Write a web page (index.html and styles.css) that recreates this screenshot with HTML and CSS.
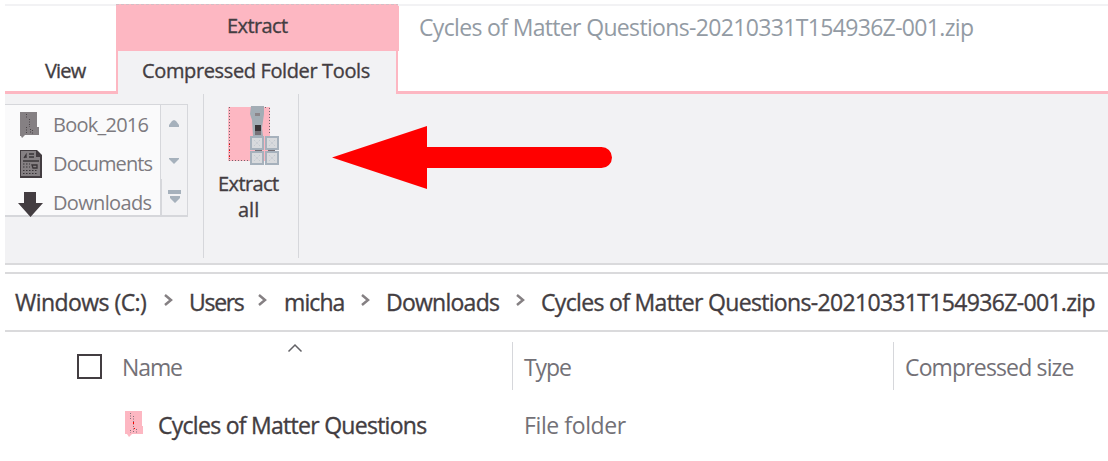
FILE: index.html
```html
<!DOCTYPE html>
<html lang="en">
<head>
<meta charset="utf-8">
<title>Compressed Folder Tools</title>
<link rel="stylesheet" href="styles.css">
</head>
<body>
<main class="window">
  <header class="titlebar">
    <div class="tab-view"><span class="t-view">View</span></div>
    <div class="tab-tools">
      <div class="tab-context"><span class="t-extract">Extract</span></div>
      <div class="tab-name"><span class="t-tools">Compressed Folder Tools</span></div>
    </div>
    <div class="caption"><span class="t-title">Cycles of Matter Questions-20210331T154936Z-001.zip</span></div>
  </header>

  <section class="ribbon">
    <div class="group group-places">
      <div class="gallery">
        <ul class="places">
          <li>
            <svg class="place-icon" width="26" height="28" viewBox="0 0 26 28"><path d="M5 1h17v15h2v8H10l-3 3-1-2H5z" fill="#858083"/><path d="M11.500 3v5m3 0v8m-3 0v7m4-5v5m2-4v4" stroke="#494346" stroke-dasharray="1 1.5"/></svg>
            <span class="t-book">Book_2016</span>
          </li>
          <li>
            <svg class="place-icon" width="26" height="28" viewBox="0 0 26 28"><path d="M5 0h17l5 5v23H5z" fill="#433d41"/><path d="M6 1h15v6h4v19H6z" fill="#858083"/><path d="M9 8l2-3v3M14 4h5M14 7h5M8 11h16M17 15h5v3h-4z" fill="none" stroke="#393438" stroke-width="1.3"/><path d="M8 14h7M8 17h7M8 20.500h15M8 23.500h15" stroke="#393438" stroke-width="1.2" stroke-dasharray="1.500 1.500"/></svg>
            <span class="t-docs">Documents</span>
          </li>
          <li>
            <svg class="place-icon" width="26" height="28" viewBox="0 0 26 28"><path d="M9 2h12v11h7L15.500 27 3 13h6z" fill="#433d41"/></svg>
            <span class="t-down">Downloads</span>
          </li>
        </ul>
        <div class="scroller">
          <div class="scroll-btn"><svg width="12" height="8"><path d="M6 0l2 1 3 4v2H1V5l3-4z" fill="#a6b1bc"/></svg></div>
          <div class="scroll-btn"><svg width="12" height="8"><path d="M1 1h10v1L6 7 1 2z" fill="#a6b1bc"/></svg></div>
          <div class="scroll-btn scroll-more"><svg width="14" height="14"><path d="M0 0h13v4H0zM2 6h10v2l-5 5-5-5z" fill="#a6b1bc"/></svg></div>
        </div>
      </div>
    </div>
    <div class="group group-extract">
      <svg class="extract-icon" width="56" height="62" viewBox="0 0 56 62">
        <path d="M4 3h42v54H4z" fill="#fdb7c2"/>
        <path d="M5.500 3v54M5 56.500h22M29 3.500h15M45.500 4v27" fill="none" stroke="#71666d" stroke-dasharray="1 2"/>
        <path d="M5.500 40v13" stroke="#f00" stroke-dasharray="1 5"/>
        <path d="M27 2h13v8l-2 14 1 8H29l-1-16-2-6z" fill="#a3adb5"/>
        <path d="M31 23h6v8h-6z" fill="#777278"/>
        <path d="M31 9h5v3h-5z" fill="#8c8589"/>
        <path d="M31 21h6v6h-6z" fill="#393438"/>
        <path d="M31 44h7v4h-7m13-4h7v4h-7" fill="#756f75"/>
        <g fill="#d8dadd" stroke="#a6b1bc" stroke-width="2"><path d="M27 33h12v12H27zM42 33h12v12H42zM27 48h12v12H27zM42 48h12v12H42z"/></g>
        <path d="M30 36l6 6m0-6l-6 6m15-6l6 6m0-6l-6 6M30 51l6 6m0-6l-6 6m15-6l6 6m0-6l-6 6" stroke="#bac2ca" stroke-dasharray="1 1.500"/>
      </svg>
      <span class="t-cmd">Extract</span>
      <span class="t-all">all</span>
    </div>
    <svg class="pointer" width="282" height="66" viewBox="0 0 282 66"><path d="M0 32.500L95 1v21h174.500a10.500 10.500 0 0 1 0 21H95v21z" fill="#f00"/></svg>
  </section>

  <nav class="address">
    <span class="t-c">Windows (C:)</span>
    <svg class="chev" width="10" height="14"><path d="M1 2l6 5-6 5" fill="none" stroke="#858083" stroke-width="2.500"/></svg>
    <span class="t-users">Users</span>
    <svg class="chev" width="10" height="14"><path d="M1 2l6 5-6 5" fill="none" stroke="#858083" stroke-width="2.500"/></svg>
    <span class="t-micha">micha</span>
    <svg class="chev" width="10" height="14"><path d="M1 2l6 5-6 5" fill="none" stroke="#858083" stroke-width="2.500"/></svg>
    <span class="t-dl">Downloads</span>
    <svg class="chev" width="10" height="14"><path d="M1 2l6 5-6 5" fill="none" stroke="#858083" stroke-width="2.500"/></svg>
    <span class="t-zip">Cycles of Matter Questions-20210331T154936Z-001.zip</span>
  </nav>

  <section class="list">
    <div class="columns">
      <div class="col col-name">
        <span class="checkbox"></span>
        <span class="t-name">Name</span>
        <svg class="sort" width="16" height="10"><path d="M1.500 8.500l6.500-6.500 6.500 6.500" fill="none" stroke="#626166" stroke-width="1.500"/></svg>
      </div>
      <div class="col col-type"><span class="t-type">Type</span></div>
      <div class="col col-size"><span class="t-size">Compressed size</span></div>
    </div>
    <div class="row">
      <div class="cell-name">
        <svg class="folder" width="20" height="28" viewBox="0 0 20 28"><path d="M1 1h17v15h1v8H8l-3 3-2-3H1z" fill="#fdb7c2"/><path d="M6.500 3v6m3-3v17m-3-3v3m6-4v4" stroke="#82717a" stroke-dasharray="1 1.500"/><path d="M9.500 12v2m1 4v1" stroke="#f00"/></svg>
        <span class="t-folder">Cycles of Matter Questions</span>
      </div>
      <div class="cell-type"><span class="t-ftype">File folder</span></div>
    </div>
  </section>
</main>
</body>
</html>
```
FILE: styles.css
```css
* { box-sizing: border-box; }
body { margin: 0; background: #fff; font-family: "Open Sans", "Noto Sans", sans-serif; color: #433d41; overflow: hidden; }
span { white-space: nowrap; }
svg { display: block; flex: none; }
.window { height: 461px; padding: 4px 0 0 5px; }

.titlebar { display: flex; height: 90px; font-size: 20px; }
.tab-view { width: 111px; border-top: 2px solid #f2f2f4; border-bottom: 3px solid #fdb7c2; padding: 50px 0 0 40px; line-height: 30px; }
.tab-tools { width: 283px; }
.tab-context { height: 47px; background: #fdb7c2; border-top: 1px dashed #d3bec5; padding-left: 111px; line-height: 41px; }
.tab-name { width: 282px; height: 43px; background: #f2f2f4; border: solid #fdb7c2; border-width: 0 2px; padding-left: 24px; line-height: 40px; }
.caption { flex: 1; border-top: 2px solid #f2f2f4; border-bottom: 3px solid #fdb7c2; margin-left: -1px; padding-left: 21px; line-height: 42px; font-size: 23px; color: #939ba4; }

.ribbon { display: flex; height: 171px; background: #f2f2f4; border-bottom: 2px solid #dadadc; }
.group { height: 164px; border-right: 1px solid #d6d7db; padding-top: 10px; }
.group-places { width: 199px; }
.gallery { display: flex; width: 183px; height: 113px; border: 1px solid #d6d7db; border-width: 1px 1px 2px 0; }
.places { width: 155px; margin: 0; padding: 0; list-style: none; background: #fafafb; font-size: 20px; color: #7d7a80; }
.places li { display: flex; align-items: center; height: 39.500px; line-height: 39px; padding-left: 10px; }
.places li + li span { position: relative; top: -1px; }
.place-icon { margin-right: 12px; overflow: visible; }
.scroller { flex: 1; border-left: 1px solid #d6d7db; }
.scroll-btn { height: 37px; display: flex; align-items: center; justify-content: center; }
.scroll-more { height: 36px; border-left: 1px solid #d6d7db; }
.group-extract { width: 95px; display: flex; flex-direction: column; padding: 10px 0 0 14px; font-size: 20px; line-height: 26px; }
.extract-icon { margin: 0 0 5px 6px; }
.group-extract .t-all { margin-left: 20px; }
.pointer { margin: 31px 0 0 33px; }

.address { display: grid; grid-template-columns: 149px 25px 69px 26px 77px 25px 130px 25px 1fr; align-items: center; height: 60px; margin-top: 7px; padding-left: 10px; border: solid #dadadc; border-width: 2px 0; font-size: 23px; line-height: 56px; }
.chev { margin: 0 0 4px 0; }

.columns { display: flex; height: 70px; font-size: 23px; line-height: 30px; color: #737177; }
.col { height: 48px; margin-top: 10px; padding-top: 10px; }
.col-name { display: flex; width: 507px; padding: 10px 0 0 72px; }
.checkbox { width: 25px; height: 25px; border: 2px solid #433d41; margin: 2px 20px 0 0; }
.col-type { width: 381px; border-left: 1px solid #d6d7db; padding-left: 11px; }
.col-size { border-left: 1px solid #d6d7db; padding-left: 11px; }
.t-name { width: 60px; }
.sort { margin: -9px 0 0 105px; }
.row { display: flex; font-size: 23px; line-height: 46px; }
.cell-name { display: flex; align-items: center; width: 519px; padding-left: 119px; gap: 14px; }
.folder { margin-bottom: 3px; }
.cell-type { color: #737177; }

.t-extract, .t-cmd, .t-tools, .t-all, .t-view, .address span, .t-folder { -webkit-text-stroke: .35px currentColor; }
.t-view { letter-spacing: -.8px; }
.t-extract, .t-cmd { letter-spacing: -.6px; }
.t-tools { letter-spacing: -.37px; }
.t-book { letter-spacing: -.75px; }
.t-docs { letter-spacing: -.87px; }
.t-down { letter-spacing: -.65px; }
.t-title { letter-spacing: -.66px; }
.t-zip { letter-spacing: -.67px; }
.t-c { letter-spacing: -.55px; }
.t-users { letter-spacing: -1.3px; }
.t-micha { letter-spacing: -.9px; }
.t-dl { letter-spacing: -.75px; }
.t-folder { letter-spacing: -.72px; }
.t-name, .t-type { letter-spacing: -1.1px; }
.t-size { letter-spacing: -.85px; }
.t-ftype { letter-spacing: -.4px; }
```
